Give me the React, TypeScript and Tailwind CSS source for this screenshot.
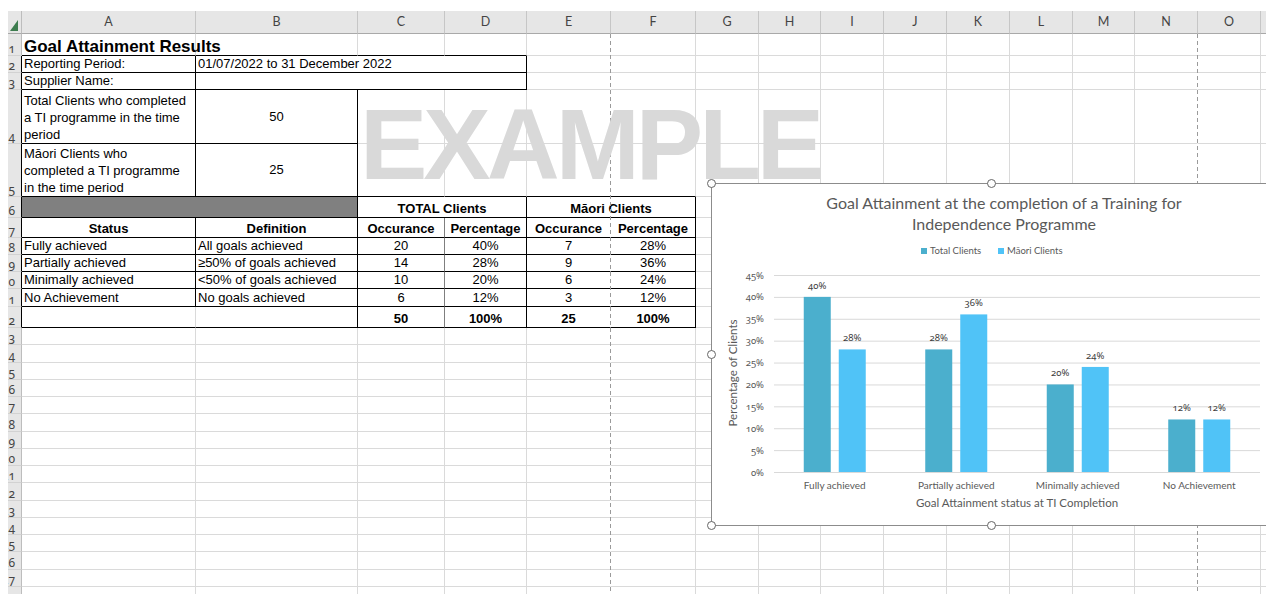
import type { ReactNode } from 'react';

type Cell = {
  t?: ReactNode;
  span?: number;
  r?: string;
  b?: string;
  v?: string;
  cls?: string;
};

// border colours used by the sheet
const GRID_R = 'border-r-[#dadada]';
const GRID_B = 'border-b-[#dadada]';
const BLACK_R = 'border-r-black';
const BLACK_B = 'border-b-black';
const GREY_R = 'border-r-[#7f7f7f]';
const BLANK_R = 'border-r-white';

const COLUMNS = ['A', 'B', 'C', 'D', 'E', 'F', 'G', 'H', 'I', 'J', 'K', 'L', 'M', 'N', 'O', ''];
// E and N carry a page break on their right edge, drawn as an overlay
const BREAK_COLS = [4, 13];

const box = { r: BLACK_R, b: BLACK_B };
const center = 'justify-center';
const bold = 'font-bold justify-center';

const outcomes = [
  { status: 'Fully achieved', def: 'All goals achieved', total: 20, maori: 7 },
  { status: 'Partially achieved', def: '≥50% of goals achieved', total: 14, maori: 9 },
  { status: 'Minimally achieved', def: '<50% of goals achieved', total: 10, maori: 6 },
  { status: 'No Achievement', def: 'No goals achieved', total: 6, maori: 3 },
];

const TOTAL = 50;
const MAORI = 25;
const pct = (n: number, d: number) => `${Math.round((n / d) * 100)}%`;

const lines = (parts: string[]) => (
  <span className="flex flex-col">
    {parts.map((p) => (
      <span key={p}>{p}</span>
    ))}
  </span>
);

const tableRows: Cell[][] = [
  [
    { t: <span className="text-[17px] font-bold">Goal Attainment Results</span>, b: BLACK_B, cls: 'overflow-visible' },
    { b: BLACK_B },
    { b: BLACK_B },
    { b: BLACK_B },
  ],
  [{ t: 'Reporting Period:', ...box }, { t: '01/07/2022 to 31 December 2022', span: 3, ...box }],
  [{ t: 'Supplier Name:', ...box }, { span: 3, ...box }],
  [
    { t: lines(['Total Clients who completed', 'a TI programme in the time', 'period']), ...box, cls: 'leading-[17px]' },
    { t: '50', ...box, v: 'items-center', cls: center },
  ],
  [
    { t: lines(['Māori Clients who', 'completed a TI programme', 'in the time period']), ...box, cls: 'leading-[17px]' },
    { t: '25', ...box, v: 'items-center', cls: center },
    { b: BLACK_B },
    { b: BLACK_B },
    { b: BLACK_B },
    { b: BLACK_B },
  ],
  [
    { span: 2, ...box, cls: 'bg-[#808080]' },
    { span: 2, t: 'TOTAL Clients', ...box, cls: bold },
    { span: 2, t: 'Māori Clients', ...box, cls: bold },
  ],
  [
    { t: 'Status', ...box, cls: bold },
    { t: 'Definition', ...box, cls: bold },
    { t: 'Occurance', r: GREY_R, b: BLACK_B, cls: bold },
    { t: 'Percentage', ...box, cls: bold },
    { t: 'Occurance', r: BLANK_R, b: BLACK_B, cls: bold },
    { t: 'Percentage', ...box, cls: bold },
  ],
  ...outcomes.map((o) => [
    { t: o.status, ...box },
    { t: o.def, ...box },
    { t: String(o.total), r: GREY_R, b: BLACK_B, cls: center },
    { t: pct(o.total, TOTAL), ...box, cls: center },
    { t: String(o.maori), r: BLANK_R, b: BLACK_B, cls: center },
    { t: pct(o.maori, MAORI), ...box, cls: center },
  ]),
  [
    { b: BLACK_B },
    { ...box },
    { t: String(TOTAL), r: GREY_R, b: BLACK_B, cls: bold },
    { t: '100%', ...box, cls: bold },
    { t: String(MAORI), r: BLANK_R, b: BLACK_B, cls: bold },
    { t: '100%', ...box, cls: bold },
  ],
];

const ROW_COUNT = 28;

// pad each row out to the last visible column
function fullRow(cells: Cell[]) {
  const out: (Cell & { col: number })[] = [];
  let col = 0;
  for (const c of cells) {
    out.push({ ...c, col });
    col += c.span ?? 1;
  }
  while (col < COLUMNS.length) {
    out.push({ col });
    col += 1;
  }
  return out;
}

function SheetCell({ cell }: { cell: Cell & { col: number } }) {
  const last = cell.col + (cell.span ?? 1) - 1;
  const right = cell.r ?? (BREAK_COLS.includes(last) ? BLANK_R : GRID_R);
  const bottom = cell.b ?? GRID_B;
  const span = cell.span === 3 ? 'col-span-3' : cell.span === 2 ? 'col-span-2' : '';
  return (
    <div
      className={`flex overflow-hidden whitespace-nowrap border-r border-b px-[2px] leading-[16px] ${cell.v ?? 'items-end'} ${right} ${bottom} ${span} ${cell.cls ?? ''}`}
    >
      {cell.t}
    </div>
  );
}

function Sheet() {
  const rows = Array.from({ length: ROW_COUNT }, (_, i) => tableRows[i] ?? []);
  return (
    <div className="ml-[8px] mt-[11px] grid grid-cols-[14px_174px_162px_87px_82px_84px_85px_63px_62px_63px_63px_63px_63px_62px_63px_63px_40px] grid-rows-[23px_22px_17px_17px_54px_53px_21px_20px_17px_17px_17px_18px_21px_17px_18px_17px_17px_17px_18px_17px_17px_17px_18px_17px_17px_17px_18px_17px_20px]">
      {/* corner with select-all triangle */}
      <div className="border-r border-b border-r-[#bdbdbd] border-b-[#a9a9a9] bg-[#e6e6e6]">
        <svg width="14" height="22" className="block">
          <polygon points="2,20 10,20 10,9" fill="#3e7d4f" />
        </svg>
      </div>
      {COLUMNS.map((c, i) => (
        <div
          key={i}
          className="flex items-center justify-center border-r border-b border-r-[#c6c6c6] border-b-[#a9a9a9] bg-[#e6e6e6] font-['Lato',sans-serif] text-[12.5px] text-[#444]"
        >
          {c}
        </div>
      ))}
      {rows.map((cells, ri) => {
        const n = ri + 1;
        const hdrRight = n >= 2 && n <= 12 ? 'border-r-black' : 'border-r-[#bdbdbd]';
        return [
          <div
            key={`h${n}`}
            className={`flex items-end justify-end overflow-hidden whitespace-nowrap border-r border-b border-b-[#d2d2d2] bg-[#e6e6e6] pr-[6px] font-['Noto_Sans',sans-serif] text-[12px] leading-none text-[#444] oldstyle-nums ${hdrRight}`}
          >
            {n}
          </div>,
          ...fullRow(cells).map((c) => <SheetCell key={`${n}-${c.col}`} cell={c} />),
        ];
      })}
    </div>
  );
}

const totals = outcomes.map((o) => Math.round((o.total / TOTAL) * 100));
const maori = outcomes.map((o) => Math.round((o.maori / MAORI) * 100));
const categories = outcomes.map((o) => o.status);

const NUM = "font-['Noto_Sans',sans-serif] oldstyle-nums";

function Chart() {
  const base = 288;
  const unit = 197 / 45;
  const yOf = (v: number) => base - v * unit;
  const left = 62;
  const right = 548;
  const band = (right - left) / 4;
  const ticks = [0, 5, 10, 15, 20, 25, 30, 35, 40, 45];
  const handles = [
    'left-[-5px] top-[-5px]',
    'left-[275px] top-[-5px]',
    'left-[-5px] top-[166px]',
    'left-[-5px] top-[337px]',
    'left-[275px] top-[337px]',
  ];

  return (
    <div className="absolute left-[711px] top-[183px] h-[343px] w-[586px] border border-[#8c8c8c] bg-white">
      <svg width={584} height={341} className="block font-['Lato',sans-serif]">
        <text x={292} y={25} textAnchor="middle" fontSize={16} fill="#595959">
          Goal Attainment at the completion of a Training for
        </text>
        <text x={292} y={46} textAnchor="middle" fontSize={16} fill="#595959">
          Independence Programme
        </text>

        <rect x={209} y={64} width={6} height={6} fill="#4bafcd" />
        <text x={218} y={70} fontSize={9.5} fill="#595959">
          Total Clients
        </text>
        <rect x={286} y={64} width={6} height={6} fill="#50c3f7" />
        <text x={295} y={70} fontSize={9.5} fill="#595959">
          Māori Clients
        </text>

        {ticks.map((v) => (
          <g key={v}>
            <line x1={left} x2={right} y1={yOf(v) + 0.5} y2={yOf(v) + 0.5} stroke="#d9d9d9" />
            <text x={52} y={yOf(v) + 3.5} textAnchor="end" fontSize={9.5} fill="#595959" className={NUM}>
              {v}%
            </text>
          </g>
        ))}

        {categories.map((name, i) => {
          const c = left + band * (i + 0.5);
          const t = totals[i];
          const m = maori[i];
          return (
            <g key={name}>
              <rect x={c - 31} y={yOf(t)} width={27} height={base - yOf(t)} fill="#4bafcd" />
              <rect x={c + 4} y={yOf(m)} width={27} height={base - yOf(m)} fill="#50c3f7" />
              <text x={c - 17.5} y={yOf(t) - 8} textAnchor="middle" fontSize={9.5} fill="#404040" className={NUM}>
                {t}%
              </text>
              <text x={c + 17.5} y={yOf(m) - 8} textAnchor="middle" fontSize={9.5} fill="#404040" className={NUM}>
                {m}%
              </text>
              <text x={c} y={305} textAnchor="middle" fontSize={10} fill="#595959">
                {name}
              </text>
            </g>
          );
        })}

        <text x={305} y={323} textAnchor="middle" fontSize={11.5} fill="#595959">
          Goal Attainment status at TI Completion
        </text>
        <text transform="rotate(-90)" x={-189} y={25} textAnchor="middle" fontSize={11.5} fill="#595959">
          Percentage of Clients
        </text>
      </svg>
      {handles.map((h) => (
        <span
          key={h}
          className={`absolute h-[9px] w-[9px] rounded-full border-[1.5px] border-[#666] bg-white ${h}`}
        />
      ))}
    </div>
  );
}

export default function App() {
  return (
    <div className="relative h-[594px] w-[1266px] overflow-hidden bg-white font-['Liberation_Sans',Arial,sans-serif] text-[13px] text-black">
      <Sheet />

      {/* page breaks */}
      <div className="absolute left-[610px] top-[34px] bottom-0 w-px bg-[repeating-linear-gradient(to_bottom,#9a9a9a_0_4px,transparent_4px_7px)]" />
      <div className="absolute left-[1197px] top-[34px] bottom-0 w-px bg-[repeating-linear-gradient(to_bottom,#9a9a9a_0_4px,transparent_4px_7px)]" />

      <div className="absolute left-[360px] top-[94px] select-none text-[101px] font-bold leading-none tracking-[-4px] text-[#d9d9d9]">
        EXAMPLE
      </div>

      <Chart />
    </div>
  );
}
